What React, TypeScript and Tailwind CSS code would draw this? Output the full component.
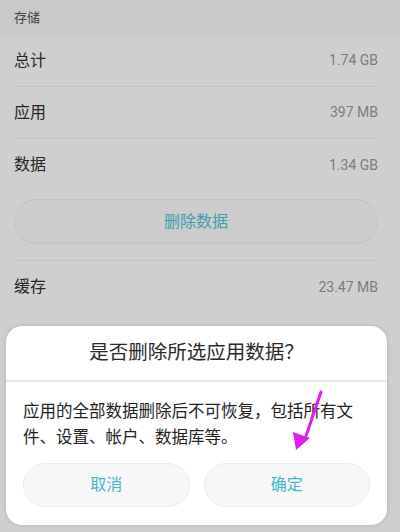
import React from "react";

const rows = [
  { label: "总计", value: "1.74 GB" },
  { label: "应用", value: "397 MB" },
  { label: "数据", value: "1.34 GB" },
];

const cjk = { fontFamily: 'Roboto, "Noto Sans CJK SC", sans-serif' };

const Row: React.FC<{ label: string; value: string; border?: boolean }> = ({ label, value, border }) => (
  <div className={`ml-[14px] mr-[22px] flex h-[52px] items-center justify-between ${border ? "border-b border-[#c4c4c4]" : ""}`}>
    <span className="text-[16px] text-[#262626]">{label}</span>
    <span className="text-[14px] text-[#7c7c7c]">{value}</span>
  </div>
);

const App: React.FC = () => {
  return (
    <div className="relative h-[532px] w-[400px] overflow-hidden bg-[#cfcfcf]" style={cjk}>
      <div className="flex h-[35px] items-center bg-[#c9c9c9] px-[14px] text-[13px] text-[#444]">存储</div>
      <Row label={rows[0].label} value={rows[0].value} border />
      <Row label={rows[1].label} value={rows[1].value} border />
      <Row label={rows[2].label} value={rows[2].value} />
      <div className="ml-[14px] mr-[22px] mt-[8px] flex h-[45px] items-center justify-center rounded-full border border-[#c2c2c2] bg-[#cccccc] text-[16px] text-[#3b9fae]">
        删除数据
      </div>
      <div className="ml-[14px] mr-[22px] mt-[16px] border-t border-[#c4c4c4]" />
      <Row label="缓存" value="23.47 MB" />

      {/* confirm dialog */}
      <div className="absolute left-[6px] top-[326px] w-[381px] rounded-[16px] bg-white shadow-[0_0_4px_rgba(0,0,0,0.15)]">
        <div className="flex h-[56px] items-center justify-center border-b-2 border-[#e6e6e6] text-[19.5px] text-[#2a2a2a]">
          是否删除所选应用数据？
        </div>
        <p className="px-[17px] pt-[17px] text-[16.5px] leading-[26px] text-[#222]">
          应用的全部数据删除后不可恢复，包括所有文件、设置、帐户、数据库等。
        </p>
        <div className="flex gap-[14px] px-[17px] pb-[18px] pt-[12px]">
          <div className="flex h-[44px] flex-1 items-center justify-center rounded-full border border-[#ececec] bg-[#f7f7f7] text-[16px] text-[#45b5c6]">
            取消
          </div>
          <div className="flex h-[44px] flex-1 items-center justify-center rounded-full border border-[#ececec] bg-[#f7f7f7] text-[16px] text-[#45b5c6]">
            确定
          </div>
        </div>
      </div>

      {/* pointer arrow */}
      <svg className="absolute left-0 top-0" width="400" height="532" viewBox="0 0 400 532">
        <path d="M321 392 L306 436" stroke="#e020e6" strokeWidth="3" strokeLinecap="round" />
        <path d="M296 450 L293 432 L310 438 Z" fill="#e020e6" />
      </svg>
    </div>
  );
};

export default App;
